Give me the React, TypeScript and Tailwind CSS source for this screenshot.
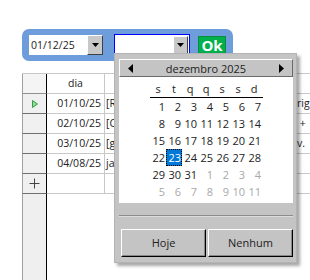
import React from 'react';

const weeks: [number, boolean][][] = [
    [[1, false], [2, false], [3, false], [4, false], [5, false], [6, false], [7, false]],
    [[8, false], [9, false], [10, false], [11, false], [12, false], [13, false], [14, false]],
    [[15, false], [16, false], [17, false], [18, false], [19, false], [20, false], [21, false]],
    [[22, false], [23, false], [24, false], [25, false], [26, false], [27, false], [28, false]],
    [[29, false], [30, false], [31, false], [1, true], [2, true], [3, true], [4, true]],
    [[5, true], [6, true], [7, true], [8, true], [9, true], [10, true], [11, true]],
];

const rows = [
    { dia: '01/10/25', left: '[R', right: 'rig', active: true },
    { dia: '02/10/25', left: '[C', right: ' +', active: false },
    { dia: '03/10/25', left: '[g', right: 'v.', active: false },
    { dia: '04/08/25', left: 'ja', right: '', active: false },
];

function DropButton({ className = '' }: { className?: string }) {
    return (
        <div
            className={`flex items-center justify-center bg-[#c8c8c8] border border-t-white border-l-white border-b-[#404040] border-r-[#404040] ${className}`}
        >
            <svg width="7" height="4" viewBox="0 0 7 4">
                <polygon points="0,0 7,0 3.5,4" fill="#000" />
            </svg>
        </div>
    );
}

function Toolbar() {
    return (
        <div className="w-[211px] h-[32px] rounded-[7px] bg-[#6d9ddb] flex items-center pl-[7px]">
            <div className="flex h-[20px]">
                <div className="w-[58px] bg-white flex items-center pl-[2px] leading-none">01/12/25</div>
                <DropButton className="w-[16px]" />
            </div>
            <div className="ml-[11px] flex h-[22px] w-[76px] border border-[#0000ff] bg-white p-[1px]">
                <div className="flex-1" />
                <DropButton className="w-[15px]" />
            </div>
            <div className="ml-[8px] w-[28px] h-[19px] bg-[#00b04c] border border-[#0c8c3c] text-white font-bold text-[15px] leading-none flex items-center justify-center">
                Ok
            </div>
        </div>
    );
}

function Table() {
    return (
        <div className="border-t border-[#c8c8c8]">
            <div className="flex h-[20px]">
                <div className="w-[25px] shrink-0 bg-[#f4f4f4] border-l border-l-[#a0a0a0] border-r border-r-black border-b border-b-[#909090]" />
                <div className="w-[58px] shrink-0 border-r border-b border-[#c8c8c8] flex items-center justify-center">dia</div>
                <div className="flex-1 border-b border-[#c8c8c8]" />
            </div>
            {rows.map((r) => (
                <div key={r.dia} className="flex h-[20px]">
                    <div className="w-[25px] shrink-0 bg-[#f0f0f0] border-l border-l-[#a0a0a0] border-r border-r-black border-b border-b-[#707070] flex items-center pl-[9px]">
                        {r.active && (
                            <svg width="6" height="8" viewBox="0 0 6 8">
                                <polygon points="0.5,0.5 5.5,4 0.5,7.5" fill="#9ad89a" stroke="#2ea043" strokeWidth="1" />
                            </svg>
                        )}
                    </div>
                    <div className="w-[58px] shrink-0 border-r border-b border-[#c8c8c8] flex items-center justify-end pr-[3px]">
                        {r.dia}
                    </div>
                    <div className="flex-1 border-b border-[#c8c8c8] flex items-center overflow-hidden whitespace-pre">
                        <span className="w-[192px] shrink-0 pl-[1px]">{r.left}</span>
                        <span>{r.right}</span>
                    </div>
                </div>
            ))}
            <div className="flex h-[20px]">
                <div className="w-[25px] shrink-0 bg-[#f0f0f0] border-l border-l-[#a0a0a0] border-r border-r-black border-b border-b-[#707070] flex items-center justify-center">
                    <svg width="11" height="11" viewBox="0 0 11 11">
                        <path d="M5.5 0.5V10.5M0.5 5.5H10.5" stroke="#444" strokeWidth="1" />
                    </svg>
                </div>
                <div className="w-[58px] shrink-0 border-r border-b border-[#c8c8c8]" />
                <div className="flex-1 border-b border-[#c8c8c8]" />
            </div>
            <div className="w-[25px] h-[100px] bg-[#efefef] border-l border-l-[#a0a0a0] border-r border-r-black" />
        </div>
    );
}

function Popup() {
    return (
        <div className="absolute left-[114px] top-[53px] w-[183px] h-[210px] bg-[#c4c4c4] border border-[#b4b4b4] shadow-[3px_3px_3px_rgba(0,0,0,0.35)] pt-[5px] pl-[4px] pr-[3px] flex flex-col">
            <div className="h-[18px] border border-t-white border-l-white border-b-[#6a6a6a] border-r-[#6a6a6a] flex items-center justify-between px-[8px]">
                <svg width="5" height="9" viewBox="0 0 5 9">
                    <polygon points="5,0 5,9 0,4.5" fill="#000" />
                </svg>
                <span className="text-[11px] leading-none text-[#222]">dezembro 2025</span>
                <svg width="5" height="9" viewBox="0 0 5 9">
                    <polygon points="0,0 0,9 5,4.5" fill="#000" />
                </svg>
            </div>
            <div className="h-[126px] bg-white pt-[2px] pl-[31px] text-[11px] leading-none">
                <div className="grid grid-cols-[repeat(7,16px)] w-[113px] h-[19px] border-b border-black">
                    {['s', 't', 'q', 'q', 's', 's', 'd'].map((d, i) => (
                        <div key={i} className="flex items-center justify-center">{d}</div>
                    ))}
                </div>
                {weeks.map((w, wi) => (
                    <div key={wi} className="grid grid-cols-[repeat(7,16px)] w-[113px] h-[17px]">
                        {w.map(([n, muted], i) => {
                            const selected = n === 23 && !muted;
                            return (
                                <div
                                    key={i}
                                    className={`flex items-center justify-end pr-[1px] ${
                                        muted ? 'text-[#a8a8a8]' : 'text-[#222]'
                                    } ${selected ? 'bg-[#0078d7] text-white outline-1 outline-dotted outline-black -outline-offset-1' : ''}`}
                                >
                                    {n}
                                </div>
                            );
                        })}
                    </div>
                ))}
            </div>
            <div className="mt-[12px] h-px bg-[#8c8c8c]" />
            <div className="h-px bg-[#dcdcdc]" />
            <div className="mt-[12px] flex gap-[2px] pl-[2px] text-[11px]">
                <div className="w-[85px] h-[28px] flex items-center justify-center border border-t-white border-l-white border-b-black border-r-black shadow-[inset_-1px_-1px_0_#888]">
                    Hoje
                </div>
                <div className="w-[85px] h-[28px] flex items-center justify-center border border-t-white border-l-white border-b-black border-r-black shadow-[inset_-1px_-1px_0_#888]">
                    Nenhum
                </div>
            </div>
        </div>
    );
}

export default function App() {
    return (
        <div className="relative w-[310px] h-[280px] overflow-hidden bg-white font-['Open_Sans',sans-serif] text-[10.5px] text-[#222]">
            <div className="pl-[22px] pt-[29px]">
                <Toolbar />
            </div>
            <div className="mt-[12px] ml-[22px]">
                <Table />
            </div>
            <Popup />
        </div>
    );
}
